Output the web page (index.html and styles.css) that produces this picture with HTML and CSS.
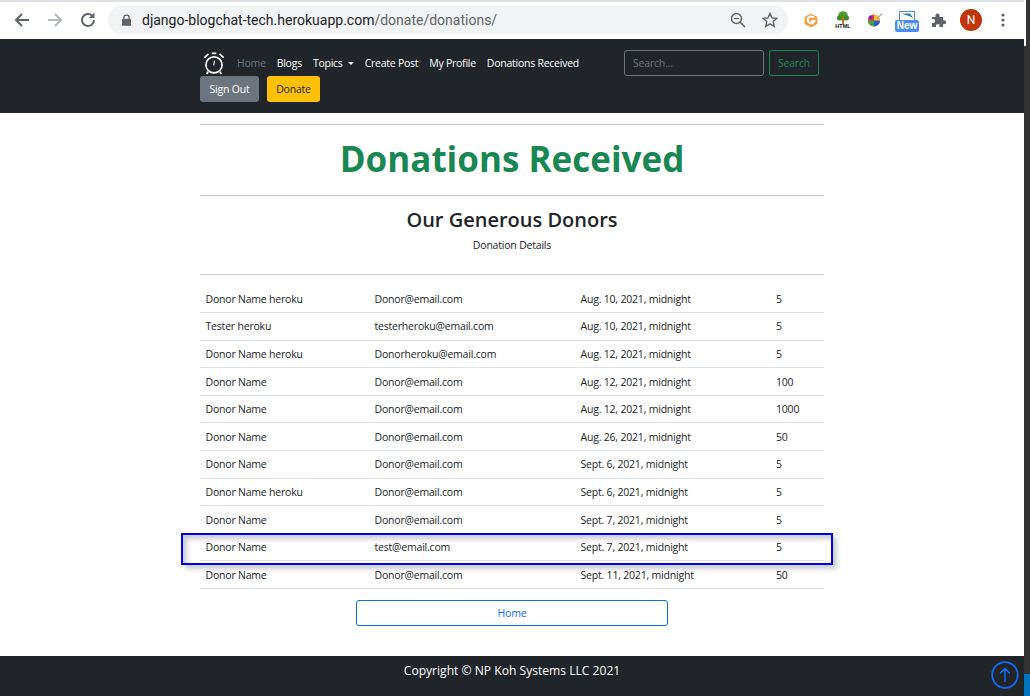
FILE: index.html
```html
<!DOCTYPE html>
<html lang="en">
<head>
    <meta charset="UTF-8">
    <title>Donations Received</title>
    <link rel="stylesheet" href="styles.css">
</head>
<body>
    <div class="chrome">
        <div class="tabstrip"></div>
        <div class="toolbar">
            <svg class="tool" width="18" height="18" viewBox="0 0 18 18"><path d="M16 9H3M9 3L3 9l6 6" fill="none" stroke="#5f6368" stroke-width="2"/></svg>
            <svg class="tool" width="18" height="18" viewBox="0 0 18 18"><path d="M2 9h13M9 3l6 6-6 6" fill="none" stroke="#b4b7bb" stroke-width="2"/></svg>
            <svg class="tool" width="18" height="18" viewBox="0 0 18 18"><path d="M15 9a6 6 0 1 1-1.800-4.300" fill="none" stroke="#5f6368" stroke-width="2"/><path d="M15.500 1.500V7H10z" fill="#5f6368"/></svg>
            <div class="omnibox">
                <svg width="9" height="12" viewBox="0 0 10 13"><path d="M2 6V4a3 3 0 0 1 6 0v2" fill="none" stroke="#5f6368" stroke-width="1.400"/><rect y="5" width="10" height="8" rx="1" fill="#5f6368"/></svg>
                <span class="url">django-blogchat-tech.herokuapp.com<span class="url-path">/donate/donations/</span></span>
                <svg class="zoom-icon" width="16" height="16" viewBox="0 0 16 16"><circle cx="6.500" cy="6.500" r="5" fill="none" stroke="#5f6368" stroke-width="1.500"/><path d="M10 10l5 5" stroke="#5f6368" stroke-width="1.600"/><path d="M4 6.500h5" stroke="#5f6368" stroke-width="1.200"/></svg>
                <svg width="16" height="16" viewBox="0 0 16 16"><path d="M8 1.500l2 4.400 4.800.5-3.600 3.200 1 4.700L8 11.900l-4.200 2.400 1-4.700L1.200 6.400l4.800-.5z" fill="none" stroke="#5f6368" stroke-width="1.400"/></svg>
            </div>
            <div class="extensions">
                <div class="ext"><svg width="14" height="15" viewBox="0 0 14 15"><path d="M7 .5l5.500 3q1 .5 1 1.500v5q0 1-1 1.500L7 14.500l-5.500-3q-1-.5-1-1.500V5q0-1 1-1.500z" fill="#f5a14a"/><path d="M10 5a3.400 3.400 0 1 0 .4 3H7" fill="none" stroke="#fff" stroke-width="2"/></svg></div>
                <div class="ext"><svg width="18" height="18" viewBox="0 0 18 18"><circle cx="9" cy="5" r="4.800" fill="#4f9a2c"/><circle cx="5.500" cy="7" r="2.500" fill="#3f8a24"/><circle cx="12.500" cy="7" r="2.500" fill="#3f8a24"/><rect x="8" y="6" width="2" height="7" fill="#c4701f"/><text class="ext-html" x="9" y="17">HTML</text></svg></div>
                <div class="ext"><svg width="16" height="16" viewBox="0 0 16 16"><circle cx="7" cy="8.500" r="6" fill="#e53935"/><path d="M7 8.500H1a6 6 0 0 0 6 6z" fill="#43a047"/><path d="M7 8.500v6a6 6 0 0 0 6-6z" fill="#1e63d0"/><path d="M7 8.500v-6a6 6 0 0 1 6 6z" fill="#fbc02d"/><circle cx="3.500" cy="5.500" r="2" fill="#8e24aa"/><path d="M10 7l5-5.500" stroke="#aaa" stroke-width="1.200"/></svg></div>
                <div class="ext ext-new">
                    <svg width="16" height="10" viewBox="0 0 16 10"><rect x=".5" y=".5" width="15" height="9" fill="#fff" stroke="#4a90d9"/><path d="M3 2.500h8l3.500 5C11 4.500 7 4.500 3 2.500z" fill="#2f7fb0"/></svg>
                    <span class="ext-label">New</span>
                </div>
                <div class="ext"><svg width="16" height="16" viewBox="0 0 16 16"><path d="M1 5h3.500V3.500a2 2 0 0 1 4 0V5H12v3.200h1.200a2 2 0 0 1 0 4H12V15H8.600v-1.300a1.800 1.800 0 0 0-3.600 0V15H1v-4h1.200a2 2 0 0 0 0-4H1z" fill="#5f6368"/></svg></div>
                <div class="ext"><div class="avatar">N</div></div>
                <div class="ext"><svg width="4" height="14" viewBox="0 0 4 14"><circle cx="2" cy="2" r="1.600" fill="#5f6368"/><circle cx="2" cy="7" r="1.600" fill="#5f6368"/><circle cx="2" cy="12" r="1.600" fill="#5f6368"/></svg></div>
            </div>
        </div>
    </div>

    <div class="page">
        <nav class="navbar">
            <div class="nav-inner">
                <div class="nav-row">
                    <svg class="brand" width="22" height="23" viewBox="0 0 24 24"><circle cx="12" cy="13.500" r="8.800" fill="none" stroke="#fff" stroke-width="1.800"/><path d="M12.500 9l-.8 5" stroke="#fff" stroke-width="1.200"/><path d="M1.500 5.500L6 1.500M22.500 5.500L18 1.500M9.500 1h5M5.500 21l-1.500 2.500M18.500 21l1.500 2.500" stroke="#fff" stroke-width="1.800"/></svg>
                    <ul class="nav-links">
                        <li class="nav-muted">Home</li>
                        <li>Blogs</li>
                        <li>Topics<span class="caret"></span></li>
                        <li>Create Post</li>
                        <li>My Profile</li>
                        <li>Donations Received</li>
                    </ul>
                    <form class="nav-search">
                        <input class="search-input" type="text" placeholder="Search...">
                        <button class="btn btn-search" type="button">Search</button>
                    </form>
                </div>
                <div class="nav-buttons">
                    <button class="btn btn-grey" type="button">Sign Out</button>
                    <button class="btn btn-yellow" type="button">Donate</button>
                </div>
            </div>
        </nav>

        <main class="content">
            <hr class="rule">
            <h1 class="title">Donations Received</h1>
            <hr class="rule">
            <h2 class="subtitle">Our Generous Donors</h2>
            <p class="details">Donation Details</p>
            <hr class="rule rule-low">
            <table class="donors">
                <tr><td>Donor Name heroku</td><td>Donor@email.com</td><td>Aug. 10, 2021, midnight</td><td>5</td></tr>
                <tr><td>Tester heroku</td><td>testerheroku@email.com</td><td>Aug. 10, 2021, midnight</td><td>5</td></tr>
                <tr><td>Donor Name heroku</td><td>Donorheroku@email.com</td><td>Aug. 12, 2021, midnight</td><td>5</td></tr>
                <tr><td>Donor Name</td><td>Donor@email.com</td><td>Aug. 12, 2021, midnight</td><td>100</td></tr>
                <tr><td>Donor Name</td><td>Donor@email.com</td><td>Aug. 12, 2021, midnight</td><td>1000</td></tr>
                <tr><td>Donor Name</td><td>Donor@email.com</td><td>Aug. 26, 2021, midnight</td><td>50</td></tr>
                <tr><td>Donor Name</td><td>Donor@email.com</td><td>Sept. 6, 2021, midnight</td><td>5</td></tr>
                <tr><td>Donor Name heroku</td><td>Donor@email.com</td><td>Sept. 6, 2021, midnight</td><td>5</td></tr>
                <tr><td>Donor Name</td><td>Donor@email.com</td><td>Sept. 7, 2021, midnight</td><td>5</td></tr>
                <tr><td>Donor Name</td><td>test@email.com</td><td>Sept. 7, 2021, midnight</td><td>5</td></tr>
                <tr><td>Donor Name</td><td>Donor@email.com</td><td>Sept. 11, 2021, midnight</td><td>50</td></tr>
            </table>
            <button class="btn btn-home" type="button">Home</button>
            <div class="highlight"></div>
        </main>

        <footer class="footer">
            <span>Copyright © NP Koh Systems LLC 2021</span>
            <svg class="to-top" width="28" height="28" viewBox="0 0 28 28"><circle cx="14" cy="14" r="12.800" fill="none" stroke="#0d6efd" stroke-width="1.700"/><path d="M14 21V7.500M9 12.500l5-5 5 5" fill="none" stroke="#0d6efd" stroke-width="1.500"/></svg>
        </footer>
    </div>
    <div class="side-thumb"></div>
</body>
</html>
```

FILE: styles.css
```css
* {
    box-sizing: border-box;
}

body {
    position: relative;
    margin: 0;
    height: 696px;
    overflow: hidden;
    font-family: "Open Sans", "Noto Sans", sans-serif;
    font-size: 10.500px;
    letter-spacing: -0.2px;
    color: #212529;
    background-color: #333;
}

.chrome {
    position: relative;
    width: 1026px;
    height: 39px;
    background-color: #fff;
    letter-spacing: normal;
}

/* little white notch of the window edge under the toolbar */
.chrome::after {
    content: "";
    position: absolute;
    left: 1024px;
    top: 39px;
    width: 2px;
    height: 7px;
    background-color: #fff;
}

.tabstrip {
    width: 1024px;
    height: 2px;
    background-color: #dee1e6;
}

.toolbar {
    height: 36px;
    display: flex;
    align-items: center;
    padding-left: 13px;
}

.tool {
    margin-right: 15px;
}

.omnibox {
    width: 680px;
    height: 28px;
    margin-left: -4px;
    padding: 0 10px 0 14px;
    display: flex;
    align-items: center;
    background-color: #f1f3f4;
    border-radius: 14px;
}

.url {
    margin-left: 11px;
    font-family: "Roboto", sans-serif;
    font-size: 14px;
    color: #202124;
    flex: 1;
}

.url-path {
    color: #5f6368;
}

.zoom-icon {
    margin-right: 16px;
}

.extensions {
    display: flex;
    align-items: center;
    margin-left: 7px;
}

.ext {
    width: 32px;
    display: flex;
    flex-direction: column;
    align-items: center;
}

.ext-html {
    font-family: "Liberation Sans", sans-serif;
    font-size: 5.500px;
    font-weight: bold;
    text-anchor: middle;
    fill: #111;
}

.ext-label {
    width: 24px;
    height: 12px;
    margin-top: -1px;
    background-color: #4a8af4;
    border-radius: 2px;
    color: #fff;
    font-family: "Liberation Sans", sans-serif;
    font-size: 10px;
    font-weight: bold;
    line-height: 12px;
    text-align: center;
}

.ext-new {
    margin-top: 3px;
}

.avatar {
    width: 22px;
    height: 22px;
    border-radius: 50%;
    background-color: #c1350b;
    color: #fff;
    font-family: "Roboto", sans-serif;
    font-size: 12px;
    line-height: 22px;
    text-align: center;
}

.page {
    width: 1024px;
    background-color: #fff;
}

.side-thumb {
    position: absolute;
    left: 1024px;
    top: 674px;
    width: 6px;
    height: 22px;
    background-color: #0078c0;
}

.navbar {
    height: 74px;
    background-color: #212529;
}

.nav-inner {
    width: 624px;
    margin-left: 200px;
    padding-top: 11px;
}

.nav-row {
    height: 26px;
    display: flex;
    align-items: center;
}

.brand {
    margin-left: 3px;
}

.nav-links {
    list-style-type: none;
    display: flex;
    gap: 11px;
    margin: 0 0 0 12px;
    padding: 0;
    letter-spacing: -0.25px;
    color: #fff;
}

.nav-muted {
    color: #6c757d;
}

.caret {
    display: inline-block;
    margin-left: 5px;
    vertical-align: 2px;
    border-top: 3px solid #fff;
    border-left: 3px solid transparent;
    border-right: 3px solid transparent;
}

.nav-search {
    display: flex;
    gap: 5px;
    margin-left: auto;
    margin-right: 5px;
}

.search-input {
    width: 140px;
    height: 26px;
    padding: 0 8px;
    background-color: #212529;
    border: 1px solid #6c757d;
    border-radius: 3px;
    font-family: inherit;
    font-size: inherit;
    letter-spacing: inherit;
    color: #fff;
}

.search-input::placeholder {
    color: #6c757d;
}

.btn {
    height: 26px;
    padding: 0;
    border: 1px solid transparent;
    border-radius: 3px;
    font-family: inherit;
    font-size: inherit;
    letter-spacing: inherit;
    white-space: nowrap;
    cursor: pointer;
}

.btn-search {
    width: 50px;
    background-color: transparent;
    border-color: #198754;
    color: #198754;
}

.nav-buttons {
    display: flex;
    gap: 8px;
}

.btn-grey {
    width: 59px;
    background-color: #6c757d;
    color: #fff;
}

.btn-yellow {
    width: 53px;
    background-color: #ffc107;
    color: #212529;
}

.content {
    position: relative;
    height: 543px;
    width: 624px;
    margin-left: 200px;
    padding-top: 11px;
    display: flex;
    flex-direction: column;
}

.rule {
    width: 100%;
    height: 1px;
    margin: 0;
    border: none;
    background-color: #c8c8c8;
}

.rule-low {
    margin-top: 21px;
}

.title {
    margin: 0;
    height: 70px;
    font-size: 35px;
    font-weight: bold;
    letter-spacing: normal;
    line-height: 68px;
    text-align: center;
    color: #198754;
}

.subtitle {
    margin: 11px 0 0;
    font-size: 20px;
    font-weight: 600;
    letter-spacing: normal;
    line-height: 26px;
    text-align: center;
}

.details {
    margin: 5px 0 0;
    line-height: 15px;
    text-align: center;
}

.donors {
    width: 100%;
    margin-top: 10px;
    border-collapse: collapse;
}

.donors td {
    height: 27.600px;
    padding: 0 0 0 5.500px;
    border-bottom: 1px solid #dee2e6;
}

.donors td:nth-child(1) {
    width: 169px;
}

.donors td:nth-child(2) {
    width: 206px;
}

.donors td:nth-child(3) {
    width: 195.500px;
}

.btn-home {
    width: 312px;
    margin: 11px auto 0;
    background-color: #fff;
    border-color: #0d6efd;
    color: #0d6efd;
}

.highlight {
    position: absolute;
    left: -19.500px;
    top: 420px;
    width: 652.500px;
    height: 32px;
    border: 2px solid #0000ee;
    box-shadow: 4px 4px 5px rgba(0, 0, 0, 0.2), inset 4px 4px 5px rgba(0, 0, 0, 0.2);
}

.footer {
    position: relative;
    height: 40px;
    padding-top: 6px;
    background-color: #212529;
    color: #fff;
    font-size: 12.100px;
    letter-spacing: normal;
    text-align: center;
}

.to-top {
    position: absolute;
    left: 991px;
    top: 5px;
}
```
